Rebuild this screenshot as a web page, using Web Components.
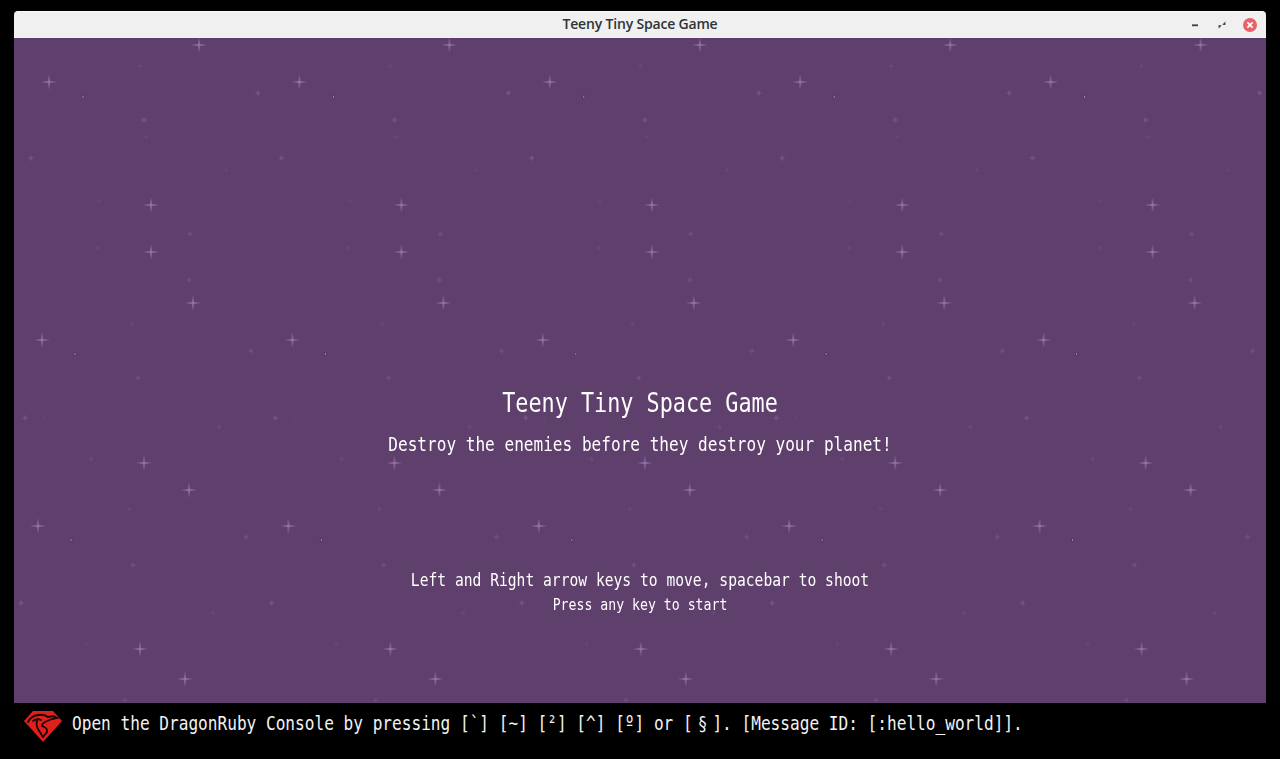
<!DOCTYPE html>
<html>
<head>
<meta charset="utf-8">
<title>Teeny Tiny Space Game</title>
<style>
    html, body { margin: 0; height: 100%; background: #000; }
    body { font-family: "DejaVu Sans Mono", monospace; overflow: hidden; }
</style>
</head>
<body>
<game-window label="Teeny Tiny Space Game">
    <title-screen
        heading="Teeny Tiny Space Game"
        tagline="Destroy the enemies before they destroy your planet!"
        help="Left and Right arrow keys to move, spacebar to shoot"
        prompt="Press any key to start"></title-screen>
</game-window>
<console-bar></console-bar>

<script>
const windowTemplate = document.createElement('template')
windowTemplate.innerHTML = `
    <style>
        :host {
            display: block;
            margin: 11px 14px 0;
            height: 692px;
        }
        .bar {
            height: 26px;
            background: #f0f0f0;
            border-top: 1px solid #fafafa;
            border-radius: 4px 4px 0 0;
            display: grid;
            grid-template-columns: 1fr auto 1fr;
            align-items: center;
            box-shadow: inset 0 -1px 0 #f6f0f6;
        }
        .label {
            grid-column: 2;
            padding-bottom: 4px;
            font: 600 14px "Open Sans", sans-serif;
            letter-spacing: -.18px;
            color: #2e3436;
        }
        .controls {
            grid-column: 3;
            justify-self: end;
            display: flex;
            align-items: center;
            gap: 15px;
            padding: 0 9px 1px 0;
        }
        svg { display: block; }
        .view {
            position: relative;
            height: 665px;
            background: #5f3f6b;
            box-shadow: inset 0 2px 0 #633a70;
            overflow: hidden;
        }
    </style>
    <div class="bar">
        <span class="label"></span>
        <div class="controls">
            <svg width="12" height="12" viewBox="0 0 12 12"><rect x="3" y="5.4" width="6" height="1.8" fill="#3a3f41"/></svg>
            <svg width="12" height="12" viewBox="0 0 12 12"><path d="M6.3 5.7 L9.4 2.6 L9.4 6.1 Z M5.7 6.5 L2.6 9.4 L2.6 6.1 Z" fill="#3a3f41"/></svg>
            <svg width="14" height="14" viewBox="0 0 14 14"><circle cx="7" cy="7" r="7" fill="#e8606a"/><path d="M4.4 4.4 L9.6 9.6 M9.6 4.4 L4.4 9.6" stroke="#fff" stroke-width="1.7"/></svg>
        </div>
    </div>
    <div class="view">
        <star-field></star-field>
        <slot></slot>
    </div>
`

class GameWindow extends HTMLElement {
    constructor() {
        super()
        this.attachShadow({mode: 'open'})
        this.shadowRoot.appendChild(windowTemplate.content.cloneNode(true))
    }

    connectedCallback() {
        this.shadowRoot.querySelector('.label').textContent = this.getAttribute('label')
    }
}

// star positions are page coordinates of the first column, the tile repeats every 250.4px
const BIG_STARS = [[199,45],[49,82],[151,205],[151,252],[193,303],[42,340],[144,463],[189,490],[38,526],[140,649],[185,679]]
const SMALL_STARS = [[140,66,.18],[258,93,.42],[144,120,.42],[146,137,.18],[31,158,.42],[226,170,.16],[99,201,.13],[190,234,.34],[98,248,.16],[189,280,.34],[132,324,.18],[251,351,.34],[138,378,.34],[25,418,.42],[44,418,.08],[219,427,.22],[91,459,.22],[129,509,.18],[246,537,.34],[133,565,.34],[21,603,.42],[213,613,.18],[86,644,.14],[125,700,.26]]
const DOTS = [[83,97],[75,354],[71,540]]
const TILE = 250.4

class StarField extends HTMLElement {
    constructor() {
        super()
        this.attachShadow({mode: 'open'})
    }

    connectedCallback() {
        let stars = ''
        let dots = ''
        for (let k = 0; k < 5; k++) {
            const dx = k * TILE - 14
            BIG_STARS.forEach(([x, y]) => {
                stars += `<use href="#big" x="${(x + dx).toFixed(1)}" y="${y - 38}"/>`
            })
            SMALL_STARS.forEach(([x, y, o]) => {
                stars += `<use href="#small" x="${(x + dx).toFixed(1)}" y="${y - 38}" opacity="${o}"/>`
            })
            DOTS.forEach(([x, y]) => {
                dots += `<rect x="${(x + dx - 1.5).toFixed(1)}" y="${y - 39.5}" width="3" height="3" fill="#4d3358" opacity=".7"/>`
                dots += `<rect x="${(x + dx - .5).toFixed(1)}" y="${y - 38.5}" width="1" height="1" fill="#efe6f2"/>`
            })
        }
        this.shadowRoot.innerHTML = `
            <style>
                :host { position: absolute; inset: 0; display: block; }
                svg { display: block; width: 100%; height: 100%; }
            </style>
            <svg xmlns="http://www.w3.org/2000/svg">
                <defs>
                    <linearGradient id="h"><stop offset="0" stop-color="#8a6a9f" stop-opacity="0"/><stop offset=".5" stop-color="#9272a7"/><stop offset="1" stop-color="#8a6a9f" stop-opacity="0"/></linearGradient>
                    <linearGradient id="v" x2="0" y2="1"><stop offset="0" stop-color="#8a6a9f" stop-opacity="0"/><stop offset=".5" stop-color="#9272a7"/><stop offset="1" stop-color="#8a6a9f" stop-opacity="0"/></linearGradient>
                    <filter id="soft" x="0" y="0" width="100%" height="100%"><feGaussianBlur stdDeviation=".6"/></filter>
                    <symbol id="big" overflow="visible">
                        <rect x="-8" y="-1" width="16" height="2" fill="url(#h)"/>
                        <rect x="-1" y="-8" width="2" height="16" fill="url(#v)"/>
                    </symbol>
                    <symbol id="small" overflow="visible">
                        <rect x="-4" y="-1.2" width="8" height="2.4" fill="url(#h)"/>
                        <rect x="-1.2" y="-4" width="2.4" height="8" fill="url(#v)"/>
                    </symbol>
                </defs>
                <g filter="url(#soft)">${stars}</g>
                ${dots}
            </svg>
        `
    }
}

const screenTemplate = document.createElement('template')
screenTemplate.innerHTML = `
    <style>
        :host {
            position: relative;
            display: flex;
            flex-direction: column;
            align-items: center;
            padding-top: 355px;
            color: #fff;
            font-family: "DejaVu Sans Mono", monospace;
            white-space: pre;
        }
        div { line-height: 1; transform: scaleY(1.2); }
        .heading { font-size: 21.8px; }
        .tagline { font-size: 16.08px; margin-top: 22px; }
        .help { font-size: 14.65px; margin-top: 120px; }
        .prompt { font-size: 13.2px; margin-top: 10px; }
    </style>
    <div class="heading"></div>
    <div class="tagline"></div>
    <div class="help"></div>
    <div class="prompt"></div>
`

class TitleScreen extends HTMLElement {
    constructor() {
        super()
        this.attachShadow({mode: 'open'})
        this.shadowRoot.appendChild(screenTemplate.content.cloneNode(true))
    }

    connectedCallback() {
        for (const name of ['heading', 'tagline', 'help', 'prompt']) {
            this.shadowRoot.querySelector('.' + name).textContent = this.getAttribute(name)
        }
    }
}

const consoleTemplate = document.createElement('template')
consoleTemplate.innerHTML = `
    <style>
        :host {
            display: flex;
            align-items: center;
            gap: 10px;
            padding: 0 0 0 24px;
            height: 41px;
            color: #f2f2f2;
            font: 16.12px "DejaVu Sans Mono", monospace;
            white-space: pre;
        }
        svg { display: block; flex: none; margin-top: 4px; }
        .text { display: block; transform: scaleY(1.2); }
        .sect { padding: 0 5px; }
    </style>
    <svg width="38" height="32" viewBox="0 0 38 32">
        <path d="M9 1 H29 L38 11 L19 32 L0 11 Z" fill="#df201b"/>
        <g fill="none" stroke="#1a0506" stroke-width="1.8" stroke-linecap="round">
            <path d="M4 12 Q7 6 14 5 Q20 4 24 7"/>
            <path d="M24 7 L29 6 L33 8 L28 9 L23 11 Q18 13 18 16 Q24 18 23 22 L19 27"/>
            <path d="M14 9 Q11 13 14 19 L19 27"/>
            <path d="M9 11 Q13 8 17 10"/>
        </g>
    </svg>
    <span class="text">Open the DragonRuby Console by pressing [\`] [~] [²] [^] [º] or [<span class="sect">§</span>]. [Message ID: [:hello_world]].</span>
`

class ConsoleBar extends HTMLElement {
    constructor() {
        super()
        this.attachShadow({mode: 'open'})
        this.shadowRoot.appendChild(consoleTemplate.content.cloneNode(true))
    }
}

window.customElements.define('star-field', StarField)
window.customElements.define('game-window', GameWindow)
window.customElements.define('title-screen', TitleScreen)
window.customElements.define('console-bar', ConsoleBar)
</script>
</body>
</html>
